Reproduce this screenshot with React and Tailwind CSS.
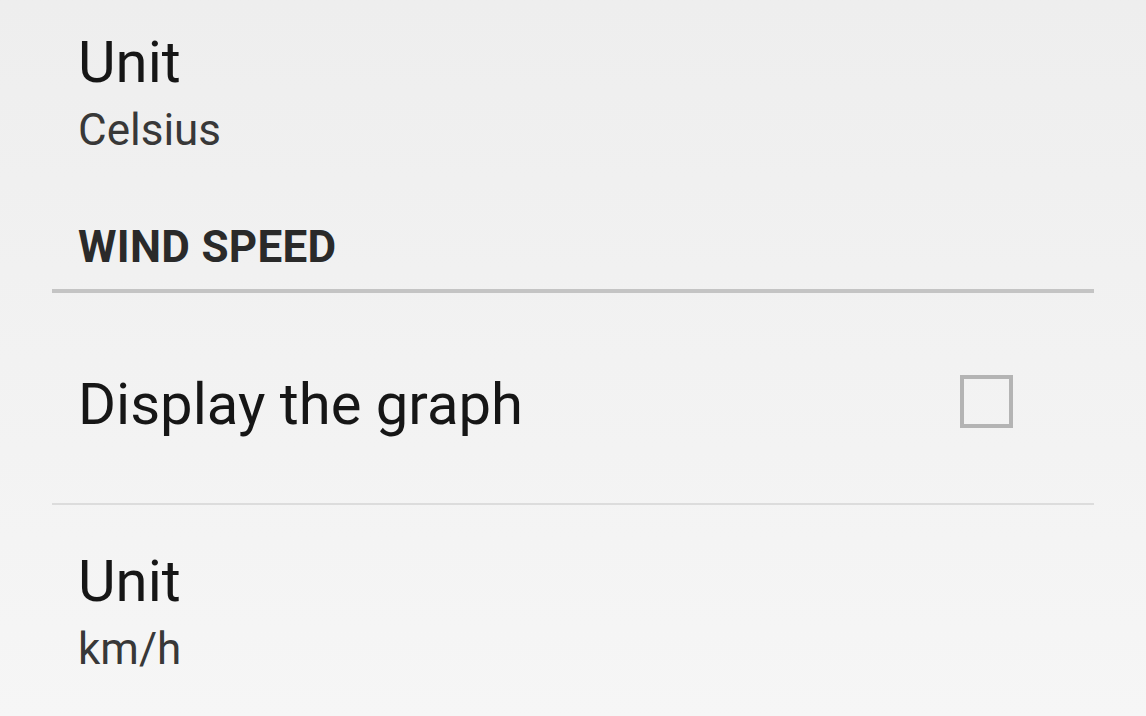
export default function App() {
  return (
    <div
      className="w-[1146px] h-[716px] overflow-hidden bg-gradient-to-b from-[#eeeeee] to-[#f6f6f6] text-[#161616]"
      style={{ fontFamily: "Roboto, 'Noto Sans', sans-serif" }}
    >
      {/* temperature unit */}
      <div className="pl-[78px] pt-[33px]">
        <div className="text-[58px] leading-none">Unit</div>
        <div className="mt-[17px] text-[44px] leading-none text-[#383838]">Celsius</div>
      </div>

      {/* section header */}
      <div className="pl-[78px] mt-[73px] text-[44px] leading-none font-bold tracking-[0.3px] text-[#2a2a2a]">
        WIND SPEED
      </div>
      <div className="mx-[52px] mt-[20px] h-[4px] bg-[#c4c4c4]" />

      {/* graph toggle */}
      <div className="flex items-start justify-between pl-[78px] pr-[133px] pt-[82px]">
        <div className="text-[58px] leading-none">Display the graph</div>
        <div className="w-[53px] h-[53px] border-[4px] border-[#b4b4b4]" />
      </div>
      <div className="mx-[52px] mt-[70px] h-[2px] bg-[#dcdcdc]" />

      {/* wind unit */}
      <div className="pl-[78px] pt-[47px]">
        <div className="text-[58px] leading-none">Unit</div>
        <div className="mt-[17px] text-[44px] leading-none text-[#383838]">km/h</div>
      </div>
    </div>
  );
}
